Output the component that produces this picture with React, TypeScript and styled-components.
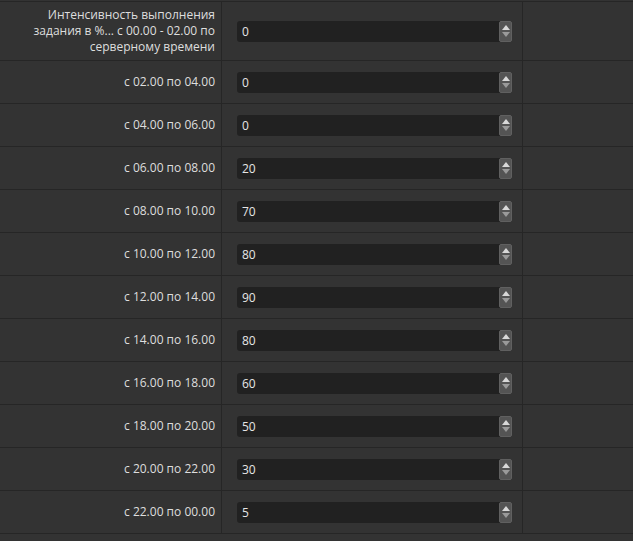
import React from "react";
import styled, { createGlobalStyle } from "styled-components";

const Global = createGlobalStyle`
  html, body { margin: 0; padding: 0; background: #333333; }
  body { font-family: "Open Sans", "Noto Sans", sans-serif; font-size: 12px; color: #dcdcdc; }
`;

const Table = styled.div`
  margin-top: 1px;
  border-top: 1px solid #262626;
  display: grid;
  grid-template-columns: 222px 301px 1fr;
  background: #333333;
  width: 633px;
`;

const Cell = styled.div<{ $tall?: boolean }>`
  border-bottom: 1px solid #262626;
  height: ${(p) => (p.$tall ? 58 : 42)}px;
  display: flex;
  align-items: center;
`;

const LabelCell = styled(Cell)`
  border-right: 1px solid #262626;
  justify-content: flex-end;
  padding-right: 6px;
  text-align: right;
  line-height: 16px;
  color: #dedede;
`;

const InputCell = styled(Cell)`
  border-right: 1px solid #262626;
  padding-left: 15px;
`;

const EmptyCell = styled(Cell)``;

const Field = styled.div`
  position: relative;
  width: 275px;
  height: 21px;
  background: #212121;
  border-radius: 3px;
  display: flex;
  align-items: center;
`;

const Value = styled.span`
  padding-left: 5px;
  color: #e6e6e6;
  font-size: 12px;
`;

const Spinner = styled.div`
  position: absolute;
  right: 0;
  top: 0;
  width: 13px;
  height: 21px;
  box-sizing: border-box;
  background: #545454;
  border: 1px solid #606060;
  border-radius: 2px;
  display: flex;
  flex-direction: column;
  align-items: center;
  justify-content: center;
  gap: 2px;
`;

const Arrow = styled.div<{ $down?: boolean }>`
  width: 0;
  height: 0;
  border-left: 4px solid transparent;
  border-right: 4px solid transparent;
  ${(p) =>
    p.$down
      ? "border-top: 5px solid #9a9a9a;"
      : "border-bottom: 5px solid #d8d8d8;"}
`;

const rows: { label: React.ReactNode; value: string; tall?: boolean }[] = [
  {
    label: (
      <>
        Интенсивность выполнения
        <br />
        задания в %... с 00.00 - 02.00 по
        <br />
        серверному времени
      </>
    ),
    value: "0",
    tall: true,
  },
  { label: "с 02.00 по 04.00", value: "0" },
  { label: "с 04.00 по 06.00", value: "0" },
  { label: "с 06.00 по 08.00", value: "20" },
  { label: "с 08.00 по 10.00", value: "70" },
  { label: "с 10.00 по 12.00", value: "80" },
  { label: "с 12.00 по 14.00", value: "90" },
  { label: "с 14.00 по 16.00", value: "80" },
  { label: "с 16.00 по 18.00", value: "60" },
  { label: "с 18.00 по 20.00", value: "50" },
  { label: "с 20.00 по 22.00", value: "30" },
  { label: "с 22.00 по 00.00", value: "5" },
];

export default function App() {
  return (
    <>
      <Global />
      <Table>
        {rows.map((r, i) => (
          <React.Fragment key={i}>
            <LabelCell $tall={r.tall}>
              <span>{r.label}</span>
            </LabelCell>
            <InputCell $tall={r.tall}>
              <Field>
                <Value>{r.value}</Value>
                <Spinner>
                  <Arrow />
                  <Arrow $down />
                </Spinner>
              </Field>
            </InputCell>
            <EmptyCell $tall={r.tall} />
          </React.Fragment>
        ))}
      </Table>
    </>
  );
}
